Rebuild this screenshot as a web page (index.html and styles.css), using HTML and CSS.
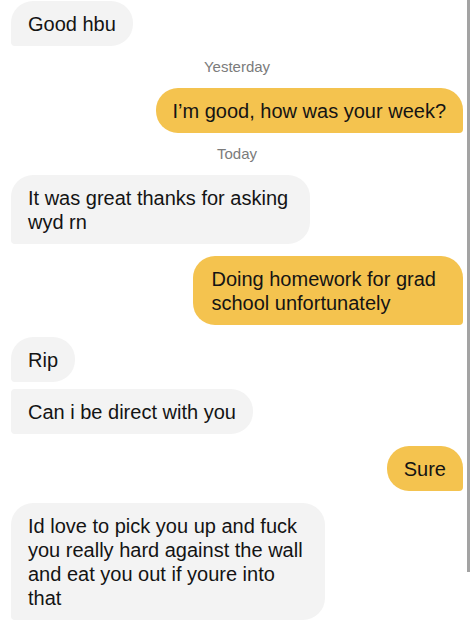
FILE: index.html
```html
<!DOCTYPE html>
<html lang="en">
<head>
<meta charset="utf-8">
<title>Chat</title>
<link rel="stylesheet" href="styles.css">
</head>
<body>
<div class="chat">
  <div class="row in"><div class="bubble recv first">Good hbu</div></div>
  <div class="stamp">Yesterday</div>
  <div class="row out"><div class="bubble sent">I’m good, how was your week?</div></div>
  <div class="stamp">Today</div>
  <div class="row in"><div class="bubble recv first multi">It was great thanks for asking<br>wyd rn</div></div>
  <div class="row out"><div class="bubble sent multi">Doing homework for grad<br>school unfortunately</div></div>
  <div class="row in"><div class="bubble recv first">Rip</div></div>
  <div class="row in cont"><div class="bubble recv middle">Can i be direct with you</div></div>
  <div class="row out"><div class="bubble sent">Sure</div></div>
  <div class="row in"><div class="bubble recv first multi">Id love to pick you up and fuck<br>you really hard against the wall<br>and eat you out if youre into<br>that</div></div>
</div>
<div class="scrollbar"></div>
</body>
</html>
```
FILE: styles.css
```css
html, body {
  margin: 0;
  padding: 0;
  background: #ffffff;
}
body {
  width: 474px;
  height: 623px;
  overflow: hidden;
  position: relative;
  font-family: "Liberation Sans", Arial, sans-serif;
  color: #141414;
}
.chat {
  display: flex;
  flex-direction: column;
  padding: 1px 11px 0 11px;
}
.row {
  display: flex;
  margin-top: 12px;
}
.row:first-child {
  margin-top: 0;
}
.row.cont {
  margin-top: 7px;
}
.row.in {
  justify-content: flex-start;
}
.row.out {
  justify-content: flex-end;
}
.bubble {
  font-size: 20px;
  line-height: 24px;
  padding: 11px 17px 10px 17px;
  white-space: nowrap;
}
.recv {
  background: #f3f3f3;
}
.recv.first {
  border-radius: 22px 22px 22px 4px;
}
.recv.middle {
  border-radius: 4px 22px 22px 4px;
}
.recv.multi {
  padding-right: 22px;
}
.sent {
  background: #f4c34f;
  border-radius: 22px 22px 4px 22px;
}
.sent.multi {
  padding-left: 18px;
  padding-right: 27px;
}
.stamp {
  margin-top: 12px;
  text-align: center;
  font-size: 15px;
  line-height: 18px;
  color: #7b7b7b;
}
.stamp + .row {
  margin-top: 12px;
}
.scrollbar {
  position: absolute;
  left: 467px;
  top: 0;
  width: 3px;
  height: 572px;
  background: #a3a3a3;
}
```
